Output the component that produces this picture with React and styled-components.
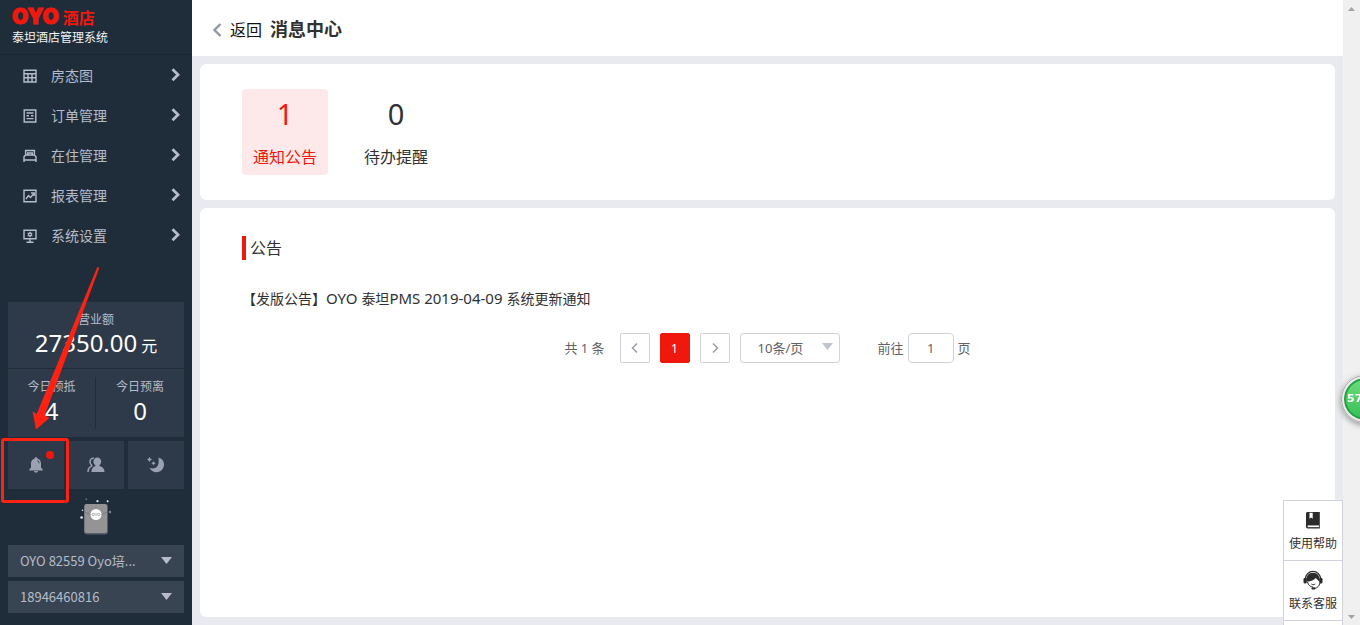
import React from "react";
import styled, { createGlobalStyle } from "styled-components";

const GlobalStyle = createGlobalStyle`
  *, *::before, *::after { box-sizing: border-box; }
  body {
    margin: 0;
    background: #e9eaf0;
    color: #303133;
    font-family: "Noto Sans", "Noto Sans CJK SC", sans-serif;
    font-size: 14px;
  }
  button, input, select { font: inherit; color: inherit; margin: 0; }
  h1, h2, p, ul, dl, dd { margin: 0; padding: 0; }
  a { color: inherit; text-decoration: none; }
`;

const Shell = styled.div`
  display: grid;
  grid-template-columns: 192px minmax(0, 1fr) 17px;
  min-height: 100vh;
`;

/* ---------- sidebar ---------- */

const Sidebar = styled.aside`
  position: sticky;
  top: 0;
  height: 100vh;
  min-height: 600px;
  display: flex;
  flex-direction: column;
  padding-bottom: 12px;
  background: #1f2d3b;
  color: #b6bcc9;
`;

const Brand = styled.div`
  height: 55px;
  padding: 7px 12px 0;
  border-bottom: 1px solid #192531;
`;

const Logo = styled.div`
  display: flex;
  align-items: center;
  gap: 4px;
  height: 20px;
  color: #f0180c;
`;

const LogoMark = styled.span`
  font: 900 21px/20px Inter, sans-serif;
  -webkit-text-stroke: 1px currentColor;
`;

const LogoName = styled.span`
  font: 700 16px/18px "Noto Sans CJK SC", sans-serif;
`;

const BrandName = styled.p`
  color: #f2f4f7;
  font-size: 12px;
  line-height: 22px;
`;

const Menu = styled.ul`
  list-style: none;
`;

const MenuLink = styled.a`
  display: flex;
  align-items: center;
  height: 40px;
  padding: 2px 12px 0 23px;
  line-height: 20px;

  span { flex: 1; margin-left: 14px; }
`;

const Dashboard = styled.div`
  display: flex;
  flex-direction: column;
  gap: 4px;
  margin-top: auto;
  padding: 0 8px;
`;

const Stats = styled.dl`
  display: grid;
  grid-template-columns: 1fr 1fr;
  background: #2e3a49;
  text-align: center;
`;

const Stat = styled.div`
  grid-column: ${(p) => (p.$wide ? "1 / -1" : "auto")};
  display: flex;
  flex-direction: column;
  height: ${(p) => (p.$wide ? "67px" : "52px")};
  margin: ${(p) => (p.$wide ? "0" : "8px 0")};
  padding-top: ${(p) => (p.$wide ? "8px" : "0")};
  border-bottom: ${(p) => (p.$wide ? "1px solid #1f2d3b" : "0")};
  border-right: ${(p) => (p.$divided ? "1px solid #1f2d3b" : "0")};

  dt { font-size: 12px; line-height: 20px; }
  dd {
    color: #fff;
    font-size: 24px;
    line-height: ${(p) => (p.$wide ? "26px" : "28px")};
  }
  small { margin-left: 4px; font-size: 16px; }
`;

const Shortcuts = styled.div`
  display: grid;
  grid-template-columns: repeat(3, 1fr);
  gap: 4px;
`;

const Shortcut = styled.button`
  position: relative;
  display: grid;
  place-items: center;
  height: 48px;
  padding: 0;
  border: 0;
  background: #2e3a49;
  color: #9aa1b1;
`;

const UnreadDot = styled.i`
  position: absolute;
  top: 10px;
  right: 10px;
  width: 8px;
  height: 8px;
  border-radius: 50%;
  background: #f0180c;
`;

const Envelope = styled.div`
  display: flex;
  justify-content: center;
  height: 48px;
  padding-top: 4px;
`;

const Picker = styled.label`
  position: relative;
  display: block;
  height: 32px;

  select {
    appearance: none;
    width: 100%;
    height: 32px;
    padding: 0 40px 2px 12px;
    border: 0;
    border-radius: 0;
    background: #384452;
    font-family: "Noto Sans CJK SC", sans-serif;
    font-size: 13px;
  }
  svg { position: absolute; top: 12px; right: 12px; pointer-events: none; }
`;

const Pointer = styled.svg`
  position: absolute;
  left: 0;
  bottom: 185px;
  pointer-events: none;
`;

const Highlight = styled.div`
  position: absolute;
  left: 1px;
  bottom: 122px;
  width: 68px;
  height: 65px;
  border: 3px solid #ff2213;
  border-radius: 3px;
  pointer-events: none;
`;

/* ---------- content ---------- */

const Content = styled.main`
  display: flex;
  flex-direction: column;
  gap: 8px;
  padding-bottom: 8px;
`;

const PageHeader = styled.header`
  display: flex;
  align-items: center;
  height: 56px;
  padding: 2px 20px 0;
  background: #fff;
`;

const BackLink = styled.a`
  display: flex;
  align-items: center;
  gap: 8px;
  margin-right: 8px;
  padding-top: 2px;
  color: #111;
  font-size: 16px;
  line-height: 24px;
`;

const PageTitle = styled.h1`
  font-size: 18px;
  font-weight: 700;
  line-height: 24px;
`;

const Card = styled.section`
  flex: ${(p) => (p.$grow ? "1" : "none")};
  margin: 0 8px;
  padding: ${(p) => (p.$grow ? "28px 42px" : "25px 42px")};
  border-radius: 6px;
  background: #fff;
`;

const Tabs = styled.div`
  display: flex;
  gap: 25px;
`;

const Tab = styled.button`
  display: flex;
  flex-direction: column;
  align-items: center;
  gap: 12px;
  width: 86px;
  height: 86px;
  padding: 6px 0;
  border: 0;
  border-radius: 4px;
  background: ${(p) => (p.$active ? "#fde9e9" : "transparent")};
  color: ${(p) => (p.$active ? "#f0180c" : "#303133")};

  strong { font-size: 29px; font-weight: 400; line-height: 38px; }
  span { font-size: 16px; line-height: 24px; }
`;

const SectionTitle = styled.h2`
  padding-left: 4px;
  border-left: 4px solid #f0180c;
  font-size: 16px;
  font-weight: 400;
  line-height: 24px;
`;

const Notice = styled.a`
  display: block;
  margin: 24px 0 20px;
  line-height: 29px;

  span { font-size: 15px; }
`;

const Pagination = styled.nav`
  display: flex;
  align-items: center;
  justify-content: center;
  gap: 10px;
  color: #606266;
  font-size: 13px;
  line-height: 28px;
`;

const Total = styled.span`
  margin-right: 5px;
`;

const PageButton = styled.button`
  display: grid;
  place-items: center;
  width: 30px;
  height: 30px;
  padding: 0;
  border: 1px solid ${(p) => (p.$current ? "#f0180c" : "#d0d3dc")};
  border-radius: 2px;
  background: ${(p) => (p.$current ? "#f0180c" : "#fff")};
  color: ${(p) => (p.$current ? "#fff" : "#9a9da5")};
`;

const PageSize = styled.label`
  position: relative;

  select {
    appearance: none;
    display: block;
    width: 100px;
    height: 30px;
    padding: 0 30px 0 17px;
    border: 1px solid #d0d3dc;
    border-radius: 3px;
    background: #fff;
  }
  svg { position: absolute; top: 10px; right: 7px; pointer-events: none; }
`;

const Jump = styled.label`
  display: flex;
  align-items: center;
  gap: 4px;
  margin-left: 28px;

  input {
    width: 46px;
    height: 30px;
    padding: 0;
    border: 1px solid #d0d3dc;
    border-radius: 4px;
    background: #fff;
    text-align: center;
  }
`;

/* ---------- overlays ---------- */

const ScrollTrack = styled.div`
  position: sticky;
  top: 0;
  height: 100vh;
  display: flex;
  flex-direction: column;
  align-items: center;
  justify-content: space-between;
  padding: 7px 0 6px;
  background: #f0f0f0;
`;

const HelpDock = styled.div`
  position: fixed;
  right: 17px;
  bottom: 0;
  width: 60px;
  padding-bottom: 4px;
  border: 1px solid #d0d3dc;
  border-width: 0 1px;
  background: #fff;
`;

const HelpLink = styled.a`
  display: flex;
  flex-direction: column;
  align-items: center;
  gap: 4px;
  height: 60px;
  padding-top: 9px;
  border-top: 1px solid #d0d3dc;
  font-size: 12px;
  line-height: 20px;
  white-space: nowrap;

  &:last-child { height: 61px; border-bottom: 1px solid #d0d3dc; }
`;

const SpeedBall = styled.div`
  position: fixed;
  top: 60%;
  right: -29px;
  width: 48px;
  height: 48px;
  padding-left: 3px;
  border: 3px solid #ececec;
  border-radius: 50%;
  outline: 1px solid #a9a9a9;
  outline-offset: -1px;
  background: linear-gradient(#6fdc7c, #35bd55);
  box-shadow: inset 0 0 0 2px #23a045, 0 2px 6px rgba(0, 0, 0, 0.4);
  color: #fff;
  font: 700 11px/42px "DejaVu Sans", sans-serif;
`;

const Stroke = ({ size = 14, width = 1.4, children }) => (
  <svg width={size} height={size} viewBox="0 0 14 14" fill="none" stroke="currentColor" strokeWidth={width} aria-hidden="true">
    {children}
  </svg>
);

const Caret = ({ color = "#c0c4cc", width = 11, height = 7 }) => (
  <svg width={width} height={height} viewBox="0 0 11 7" aria-hidden="true">
    <path d="M0 0h11L5.5 7z" fill={color} />
  </svg>
);

const menu = [
  { label: "房态图", icon: <path d="M1 1.2h12v11.800H1zM1 4.700h12M1 8.700h12M5 5v8M9 5v8" /> },
  { label: "订单管理", icon: <path d="M1.200 1h11.600v12H1.200zM3.500 4h7M3.500 6.700h2.500M8 6.700h2.500M3.500 9.600h7" /> },
  { label: "在住管理", icon: <path d="M2.600 6V1.500h8.800V6M4.700 6V4h4.600v2M1 13V7.700L2.600 6h8.800L13 7.700V13M1 11h12" /> },
  { label: "报表管理", icon: <path d="M1 1.200h12v11.600H1zM3 10l2.500-3.500 2 2L11 4.500M8 4h3.200v3" /> },
  {
    label: "系统设置",
    icon: (
      <>
        <path d="M1 1.200h12v8.600H1zM7 10v3M3.500 13.200h7" />
        <circle cx="7" cy="5.500" r="1.500" />
        <path d="M7 2.800v1.200M7 7v1.200M4.600 4.200l1 .6M8.400 6.200l1 .6M9.400 4.200l-1 .6M5.600 6.200l-1 .6" strokeWidth="1" />
      </>
    ),
  },
];

const BellIcon = () => (
  <svg width="14" height="16" viewBox="0 0 14 16" aria-hidden="true">
    <path fill="currentColor" d="M7 .3c.8 0 1.300.5 1.300 1.200C10.700 2.100 12 4 12 6.500v4l1.700 2v1.100H.3v-1.100l1.700-2v-4C2 4 3.300 2.100 5.700 1.500 5.700.8 6.200.3 7 .3zM5 14.100h4c-.2 1-1 1.600-2 1.600s-1.800-.6-2-1.600z" />
    <path d="M8.300 3.600c1.200.5 1.700 1.400 1.800 2.700" fill="none" stroke="#2e3a49" />
  </svg>
);

const PeopleIcon = () => (
  <svg width="18" height="16" viewBox="0 0 18 16" aria-hidden="true">
    <path fill="currentColor" d="M10.300.6c2.300 0 3.900 1.700 3.900 4 0 1.500-.7 2.900-1.800 3.600v.9c2.900.7 5.100 2.400 5.100 5.900H4.400c0-3.300 1.700-5.200 4-5.900v-.9C7.100 7.400 6.400 6.100 6.400 4.600c0-2.300 1.600-4 3.900-4z" />
    <path fill="none" stroke="currentColor" strokeWidth="1.500" d="M6.800 1.300C4.700.9 3 2.400 3 4.700c0 1.500.6 2.700 1.700 3.400v1C2.600 9.900 1 11.500 1 15" />
  </svg>
);

const MoonIcon = () => (
  <svg width="18" height="16" viewBox="0 0 18 16" fill="currentColor" aria-hidden="true">
    <path d="M11.500.6c3.300.8 5.500 3.600 5.500 7 0 4.400-3.300 7.700-7.500 7.700-3.100 0-5.700-1.700-6.900-4.500 1 .5 1.900.7 3 .7 3.600 0 6-2.800 6-6.500 0-1.600.3-3-.1-4.400z" />
    <path d="M2.500 0l.9 1.600 1.600.9-1.600.9-.9 1.600-.9-1.600L0 2.500l1.600-.9zM6.500 4l.8 1.500 1.500.8-1.500.8-.8 1.500-.8-1.500-1.500-.8 1.500-.8z" />
  </svg>
);

const EnvelopeArt = () => (
  <svg width="34" height="40" viewBox="0 0 34 40" role="img" aria-label="红包">
    <rect x="5" y="7" width="24" height="30.500" rx="3" fill="#56606a" />
    <rect x="5.500" y="7" width="22.500" height="29" rx="2" fill="#949494" />
    <path d="M6 15l7 3.500h8l7-3.500" fill="none" stroke="#7d7d7d" />
    <circle cx="17" cy="17.500" r="5.500" fill="#fff" />
    <g fill="none" stroke="#999" strokeWidth=".8">
      <circle cx="14.200" cy="17.500" r="1.200" />
      <path d="M16 16.300l1 1.200 1-1.200M17 17.500v1.200" />
      <circle cx="19.800" cy="17.500" r="1.200" />
    </g>
    <g fill="#e6e9ed">
      <circle cx="18.500" cy="4.200" r="1.100" />
      <circle cx="28.600" cy="4.200" r="1" />
      <circle cx="2.600" cy="20.500" r="1.300" />
      <circle cx="3.500" cy="13.300" r=".8" />
    </g>
    <circle cx="31" cy="15" r="1.200" fill="#818a94" />
    <circle cx="7.300" cy="2.300" r=".8" fill="#818a94" />
  </svg>
);

const BookIcon = () => (
  <svg width="20" height="20" viewBox="0 0 20 20" aria-hidden="true">
    <path d="M4.500 2h12.300v16.500H4.700a1.700 1.700 0 0 1-1.700-1.700V3.500C3 2.600 3.600 2 4.500 2z" fill="#2b2b2b" />
    <path d="M6.500 2.800h3.200v6L8.100 7.500 6.500 8.800z" fill="#fff" />
    <path d="M4.700 16.300h11.300" stroke="#fff" strokeWidth="1.700" />
  </svg>
);

const ServiceIcon = () => (
  <svg width="20" height="20" viewBox="0 0 20 20" aria-hidden="true">
    <path d="M2.400 9a7.600 7.600 0 0 1 15.200 0" fill="none" stroke="#2b2b2b" strokeWidth="1.300" />
    <path d="M3.600 12C2.500 6 5.800 2.800 10 2.800S17.500 6 16.400 12c-.7-1.600-2.300-2.800-3.700-4.100-1.600 2.200-5 3.300-7.800 3.500z" fill="#2b2b2b" />
    <rect x=".5" y="7.800" width="3.300" height="5.600" rx="1.500" fill="#2b2b2b" />
    <rect x="16.200" y="7.800" width="3.300" height="5.600" rx="1.500" fill="#2b2b2b" />
    <path d="M4.500 12c.8 3.200 2.900 5 5.500 5M17 13c-.8 3-2.700 5-5.500 5.500" fill="none" stroke="#2b2b2b" />
    <rect x="8.500" y="17.200" width="3.800" height="2.400" rx="1.200" fill="#2b2b2b" />
    <path d="M8.300 14c1.200.9 2.600.9 3.900 0" fill="none" stroke="#2b2b2b" />
  </svg>
);

const helpLinks = [
  { label: "使用帮助", icon: <BookIcon /> },
  { label: "联系客服", icon: <ServiceIcon /> },
];

export default function App() {
  return (
    <>
      <GlobalStyle />
      <Shell>
        <Sidebar>
          <Brand>
            <Logo>
              <LogoMark>OYO</LogoMark>
              <LogoName>酒店</LogoName>
            </Logo>
            <BrandName>泰坦酒店管理系统</BrandName>
          </Brand>
          <Menu>
            {menu.map((item) => (
              <li key={item.label}>
                <MenuLink href="#">
                  <Stroke>{item.icon}</Stroke>
                  <span>{item.label}</span>
                  <svg width="9" height="16" viewBox="0 0 9 16" fill="none" stroke="currentColor" strokeWidth="2.800" aria-hidden="true">
                    <path d="M1.500 1.200L7 6.700l-5.500 5.500" />
                  </svg>
                </MenuLink>
              </li>
            ))}
          </Menu>
          <Dashboard>
            <Stats>
              <Stat $wide>
                <dt>营业额</dt>
                <dd>27350.00<small>元</small></dd>
              </Stat>
              <Stat $divided>
                <dt>今日预抵</dt>
                <dd>4</dd>
              </Stat>
              <Stat>
                <dt>今日预离</dt>
                <dd>0</dd>
              </Stat>
            </Stats>
            <Shortcuts>
              <Shortcut type="button" aria-label="消息">
                <BellIcon />
                <UnreadDot />
              </Shortcut>
              <Shortcut type="button" aria-label="客人"><PeopleIcon /></Shortcut>
              <Shortcut type="button" aria-label="夜审"><MoonIcon /></Shortcut>
            </Shortcuts>
            <Envelope><EnvelopeArt /></Envelope>
            <Picker>
              <select aria-label="酒店">
                <option>OYO 82559 Oyo培...</option>
              </select>
              <Caret color="#b6bcc9" />
            </Picker>
            <Picker>
              <select aria-label="账号">
                <option>18946460816</option>
              </select>
              <Caret color="#b6bcc9" />
            </Picker>
          </Dashboard>
          <Pointer width="110" height="180" viewBox="0 0 110 180" aria-hidden="true">
            <path d="M97.300 7l2 .8-54.600 147.500 4.600 2.700L36 169.500l-3.500-18 4.200 2.500z" fill="#ff2213" />
          </Pointer>
          <Highlight />
        </Sidebar>

        <Content>
          <PageHeader>
            <BackLink href="#">
              <svg width="10" height="14" viewBox="0 0 10 14" fill="none" stroke="#9096a3" strokeWidth="2.400" aria-hidden="true">
                <path d="M8.500 1L2.500 7l6 6" />
              </svg>
              返回
            </BackLink>
            <PageTitle>消息中心</PageTitle>
          </PageHeader>

          <Card>
            <Tabs>
              <Tab type="button" $active>
                <strong>1</strong>
                <span>通知公告</span>
              </Tab>
              <Tab type="button">
                <strong>0</strong>
                <span>待办提醒</span>
              </Tab>
            </Tabs>
          </Card>

          <Card $grow>
            <SectionTitle>公告</SectionTitle>
            <Notice href="#">
              【发版公告】<span>OYO </span>泰坦<span>PMS 2019-04-09 </span>系统更新通知
            </Notice>
            <Pagination aria-label="分页">
              <Total>共 1 条</Total>
              <PageButton type="button" aria-label="上一页">
                <Stroke width={1.5}><path d="M9 2.500L4.500 7 9 11.500" /></Stroke>
              </PageButton>
              <PageButton type="button" $current>1</PageButton>
              <PageButton type="button" aria-label="下一页">
                <Stroke width={1.5}><path d="M5 2.500L9.500 7 5 11.500" /></Stroke>
              </PageButton>
              <PageSize>
                <select aria-label="每页条数">
                  <option>10条/页</option>
                </select>
                <Caret />
              </PageSize>
              <Jump>
                前往
                <input type="text" defaultValue="1" />
                页
              </Jump>
            </Pagination>
          </Card>
        </Content>

        <ScrollTrack aria-hidden="true">
          <svg width="7" height="4" viewBox="0 0 7 4"><path d="M0 4h7L3.500 0z" fill="#a3a3a3" /></svg>
          <svg width="7" height="4" viewBox="0 0 7 4"><path d="M0 0h7L3.500 4z" fill="#a3a3a3" /></svg>
        </ScrollTrack>
      </Shell>

      <HelpDock>
        {helpLinks.map((item) => (
          <HelpLink href="#" key={item.label}>
            {item.icon}
            {item.label}
          </HelpLink>
        ))}
      </HelpDock>
      <SpeedBall>57</SpeedBall>
    </>
  );
}
